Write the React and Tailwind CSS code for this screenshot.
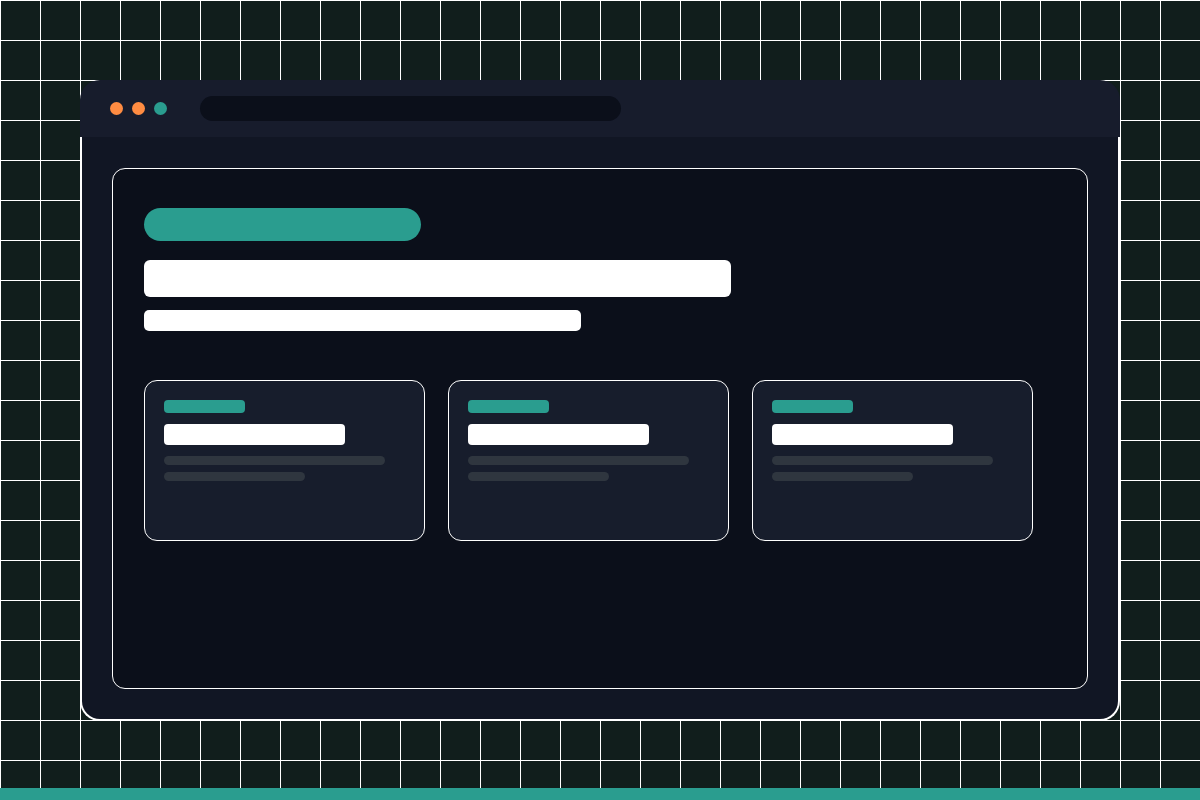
import React from 'react';

const CARDS = [0, 1, 2];

function PreviewCard() {
  return (
    <div className="w-[281px] h-[161px] rounded-[13px] border border-white bg-[#171d2c] pt-[19px] pl-[19px] flex flex-col">
      <div className="w-[81px] h-[13px] rounded-[4px] bg-[#2a9d8f]" />
      <div className="mt-[11px] w-[181px] h-[21px] rounded-[4px] bg-white" />
      <div className="mt-[11px] w-[221px] h-[9px] rounded-full bg-[#2f363f]" />
      <div className="mt-[7px] w-[141px] h-[9px] rounded-full bg-[#2f363f]" />
    </div>
  );
}

function BrowserWindow() {
  return (
    <div className="w-[1040px] flex flex-col">
      <div className="h-[57px] rounded-t-[20px] bg-[#171c2c] flex items-center pl-[30px]">
        <div className="flex items-center gap-[9px]">
          <span className="w-[13px] h-[13px] rounded-full bg-[#ff8c42]" />
          <span className="w-[13px] h-[13px] rounded-full bg-[#ff8c42]" />
          <span className="w-[13px] h-[13px] rounded-full bg-[#2a9d8f]" />
        </div>
        <div className="ml-[33px] w-[421px] h-[25px] rounded-full bg-[#0b0f1a]" />
      </div>
      <div className="h-[584px] border-x-2 border-b-2 border-white rounded-b-[20px] bg-[#111624] pt-[31px] px-[30px] pb-[30px] flex">
        <div className="flex-1 rounded-[13px] border border-white bg-[#0b0f1a] pt-[39px] pl-[31px] flex flex-col">
          <div className="w-[277px] h-[33px] rounded-full bg-[#2a9d8f]" />
          <div className="mt-[19px] w-[587px] h-[37px] rounded-[6px] bg-white" />
          <div className="mt-[13px] w-[437px] h-[21px] rounded-[5px] bg-white" />
          <div className="mt-[49px] flex gap-[23px]">
            {CARDS.map((i) => (
              <PreviewCard key={i} />
            ))}
          </div>
        </div>
      </div>
    </div>
  );
}

export default function App() {
  return (
    <div className="w-full h-[800px] flex flex-col bg-[#111e1c] bg-[linear-gradient(to_right,#ffffff_1px,transparent_1px),linear-gradient(to_bottom,#ffffff_1px,transparent_1px)] bg-[size:40px_40px]">
      <div className="flex-1 pt-[80px] pl-[80px]">
        <BrowserWindow />
      </div>
      <div className="h-[12px] bg-[#2a9d8f]" />
    </div>
  );
}
